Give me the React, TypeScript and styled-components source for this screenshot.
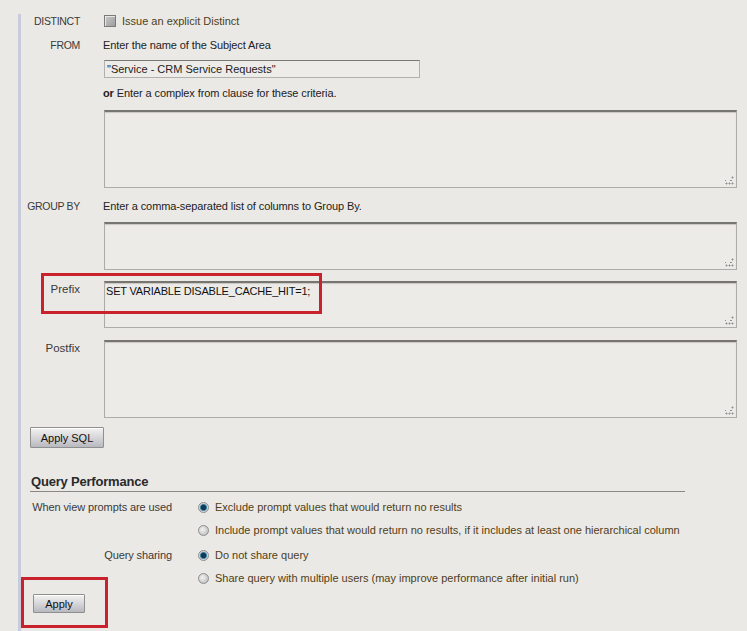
import React from "react"
import styled, { createGlobalStyle } from "styled-components"

const GlobalStyle = createGlobalStyle`
	html, body {
		margin: 0;
		padding: 0;
		background: #ebe9e6;
		font-family: "Liberation Sans", Arial, sans-serif;
		font-size: 11px;
		color: #222;
	}
`

const App = () => {
	return (
		<Page>
			<GlobalStyle />
			<Panel>
				<Row $top={0}>
					<Label>DISTINCT</Label>
					<Inline>
						<CheckBox />
						<OptionText>Issue an explicit Distinct</OptionText>
					</Inline>
				</Row>
				<Row $top={10}>
					<Label>FROM</Label>
					<Hint>Enter the name of the Subject Area</Hint>
				</Row>
				<Row $top={8}>
					<span />
					<TextInput defaultValue={`"Service - CRM Service Requests"`} />
				</Row>
				<Row $top={8}>
					<span />
					<Hint>
						<b>or</b> Enter a complex from clause for these criteria.
					</Hint>
				</Row>
				<Row $top={10}>
					<span />
					<AreaBox $h={78}>
						<Area />
						<Grip />
					</AreaBox>
				</Row>
				<Row $top={11}>
					<Label>GROUP BY</Label>
					<Hint>Enter a comma-separated list of columns to Group By.</Hint>
				</Row>
				<Row $top={9}>
					<span />
					<AreaBox $h={48}>
						<Area />
						<Grip />
					</AreaBox>
				</Row>
				<Row $top={11}>
					<Label $pad>Prefix</Label>
					<AreaBox $h={47}>
						<Area defaultValue="SET VARIABLE DISABLE_CACHE_HIT=1;" />
						<Grip />
					</AreaBox>
				</Row>
				<Row $top={12}>
					<Label $pad>Postfix</Label>
					<AreaBox $h={78}>
						<Area />
						<Grip />
					</AreaBox>
				</Row>
				<Button $w={74} $h={21} $top={9} $left={9}>
					Apply SQL
				</Button>

				<SectionTitle>Query Performance</SectionTitle>
				<OptionGrid>
					<OptLabel>When view prompts are used</OptLabel>
					<Inline>
						<Radio $on />
						<OptionText>Exclude prompt values that would return no results</OptionText>
					</Inline>
					<span />
					<Inline>
						<Radio />
						<OptionText>
							Include prompt values that would return no results, if it includes at least one hierarchical column
						</OptionText>
					</Inline>
					<OptLabel>Query sharing</OptLabel>
					<Inline>
						<Radio $on />
						<OptionText>Do not share query</OptionText>
					</Inline>
					<span />
					<Inline>
						<Radio />
						<OptionText>Share query with multiple users (may improve performance after initial run)</OptionText>
					</Inline>
				</OptionGrid>
				<Button $w={52} $h={19} $top={9} $left={12}>
					Apply
				</Button>
			</Panel>

			<Marker style={{ left: 41, top: 273, width: 281, height: 41 }} />
			<Marker style={{ left: 21, top: 577, width: 87, height: 51 }} />
		</Page>
	)
}

export default App

const Page = styled.div`
	position: relative;
	width: 747px;
	height: 631px;
	overflow: hidden;
	padding-top: 14px;
	box-sizing: border-box;
`

const Panel = styled.div`
	margin-left: 18px;
	border-left: 3px solid #c7cbdb;
	height: 640px;
	padding-right: 10px;
`

const Row = styled.div<{ $top: number }>`
	display: grid;
	grid-template-columns: 82px 1fr;
	align-items: start;
	margin-top: ${(p) => p.$top}px;
	line-height: 14px;
`

const Label = styled.div<{ $pad?: boolean }>`
	text-align: right;
	padding-right: 23px;
	padding-top: ${(p) => (p.$pad ? "1px" : "0")};
	color: #3a3a3a;
	font-size: ${(p) => (p.$pad ? "11.5px" : "10.5px")};
	letter-spacing: ${(p) => (p.$pad ? "0" : "-0.3px")};
	white-space: nowrap;
`

const Hint = styled.div`
	color: #222;
	letter-spacing: -0.1px;
	b {
		font-weight: bold;
	}
`

const Inline = styled.div`
	display: flex;
	align-items: center;
	gap: 6px;
	height: 14px;
	white-space: nowrap;
`

const OptionText = styled.span`
	color: #4f3e17;
`

const CheckBox = styled.span`
	display: inline-block;
	width: 10px;
	height: 10px;
	margin-left: 1px;
	border: 1px solid #7a7a7a;
	background: linear-gradient(135deg, #c9c9c9, #9d9d9d);
	box-shadow: inset 1px 1px 0 #e6e6e6;
`

const TextInput = styled.input`
	width: 316px;
	height: 18px;
	box-sizing: border-box;
	margin: 0 0 0 1px;
	padding: 0 2px;
	border: 1px solid #b3b1ad;
	border-top-color: #7b7977;
	background: #eeece9;
	font: 11px "Liberation Sans", Arial, sans-serif;
	color: #222;
	outline: none;
`

const AreaBox = styled.div<{ $h: number }>`
	position: relative;
	width: 633px;
	height: ${(p) => p.$h}px;
	margin-left: 1px;
	box-sizing: border-box;
	border: 1px solid #aeaca9;
	border-top: 2px solid #77756f;
	background: #edebe8;
	box-shadow: inset 0 1px 1px #c8c6c2;
`

const Area = styled.textarea`
	display: block;
	width: 100%;
	height: 100%;
	box-sizing: border-box;
	border: 0;
	background: transparent;
	resize: none;
	outline: none;
	padding: 1px 1px;
	font: 11px/14px "Liberation Sans", Arial, sans-serif;
	letter-spacing: -0.2px;
	color: #111;
`

const Grip = styled.span`
	position: absolute;
	right: 2px;
	bottom: 2px;
	width: 9px;
	height: 9px;
	background:
		radial-gradient(circle, #8c8c8c 0.9px, transparent 1.1px) 6px 0 / 3px 3px no-repeat,
		radial-gradient(circle, #8c8c8c 0.9px, transparent 1.1px) 3px 3px / 6px 3px repeat-x,
		radial-gradient(circle, #8c8c8c 0.9px, transparent 1.1px) 0 6px / 3px 3px repeat-x;
`

const Button = styled.button<{ $w: number; $h: number; $top: number; $left: number }>`
	display: block;
	width: ${(p) => p.$w}px;
	height: ${(p) => p.$h}px;
	margin-top: ${(p) => p.$top}px;
	margin-left: ${(p) => p.$left}px;
	padding: 0;
	border: 1px solid #8f8f8f;
	border-radius: 1px;
	background: linear-gradient(#f2f2f2, #d7d7da 50%, #b8b8c0);
	box-shadow: inset 0 1px 0 #fff;
	font: 11px "Liberation Sans", Arial, sans-serif;
	color: #111;
`

const SectionTitle = styled.div`
	margin: 26px 0 0 9px;
	width: 654px;
	height: 17px;
	border-bottom: 1px solid #8a8884;
	font-weight: bold;
	font-size: 13px;
	line-height: 16px;
	letter-spacing: -0.2px;
	color: #2a2a2a;
	padding-left: 1px;
`

const OptionGrid = styled.div`
	display: grid;
	grid-template-columns: 142px 1fr;
	column-gap: 26px;
	row-gap: 9px;
	margin: 8px 0 0 9px;
	line-height: 14px;
	& > :nth-child(5),
	& > :nth-child(6) {
		margin-top: 2px;
	}
`

const OptLabel = styled.div`
	text-align: right;
	color: #3a3a3a;
	letter-spacing: -0.1px;
	white-space: nowrap;
`

const Radio = styled.span<{ $on?: boolean }>`
	display: inline-block;
	flex: none;
	width: 11px;
	height: 11px;
	border-radius: 50%;
	box-sizing: border-box;
	border: 1px solid #8d8d8d;
	background: ${(p) =>
		p.$on
			? "radial-gradient(circle at 50% 50%, #0d3c57 0 2.2px, #3d7da0 3px, #c9d3da 4px, #e9e9e9 5px)"
			: "radial-gradient(circle at 40% 40%, #f3f3f3, #b3b3b3)"};
`

const Marker = styled.div`
	position: absolute;
	box-sizing: border-box;
	border: 3px solid #c9222c;
	pointer-events: none;
`
